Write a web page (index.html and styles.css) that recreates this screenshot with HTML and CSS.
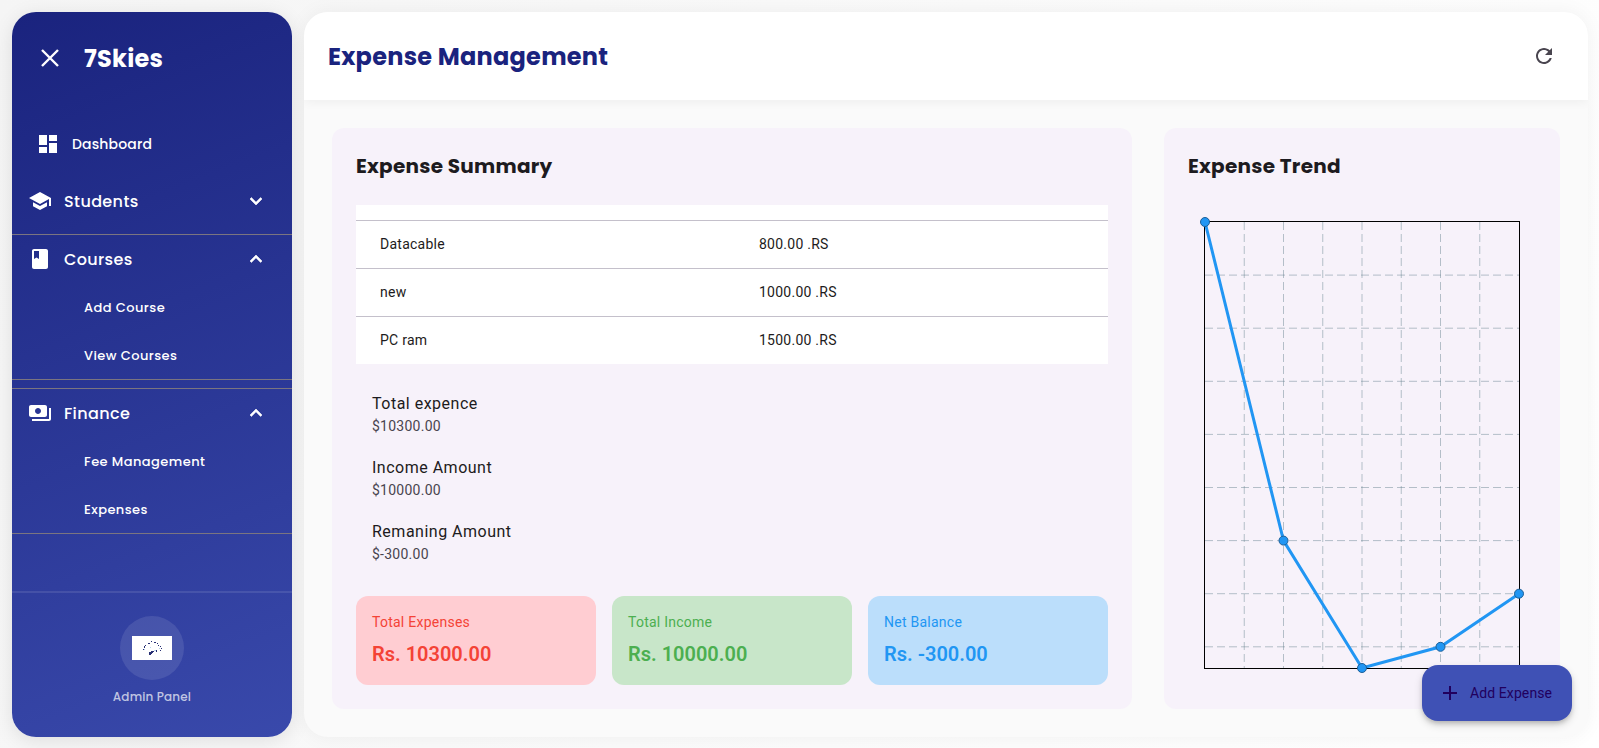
FILE: index.html
```
<!DOCTYPE html>
<html lang="en">
<head>
<meta charset="utf-8">
<title>Expense Management</title>
<link rel="stylesheet" href="styles.css">
</head>
<body>
<div class="app">
  <aside class="sidebar">
    <header class="brand">
      <svg class="close" width="28" height="28" viewBox="0 0 28 28"><path d="M6 6L22 22M22 6L6 22"/></svg>
      <span class="brand-name">7Skies</span>
    </header>
    <nav class="nav">
      <a class="nav-item">
        <svg width="24" height="24" viewBox="0 0 24 24"><path d="M3 13h8V3H3v10zm0 8h8v-6H3v6zm10 0h8V11h-8v10zm0-18v6h8V3h-8z"/></svg>
        <span>Dashboard</span>
      </a>
      <section class="group">
        <div class="group-head">
          <svg width="24" height="24" viewBox="0 0 24 24"><path d="M5 13.18v4L12 21l7-3.82v-4L12 17l-7-3.82zM12 3L1 9l11 6 9-4.91V17h2V9L12 3z"/></svg>
          <span>Students</span>
          <svg class="chevron" width="24" height="24" viewBox="0 0 24 24"><path d="M7.41 8.59L12 13.17l4.59-4.58L18 10l-6 6-6-6z"/></svg>
        </div>
      </section>
      <section class="group open">
        <div class="group-head">
          <svg width="24" height="24" viewBox="0 0 24 24"><path d="M18 2H6c-1.100 0-2 .9-2 2v16c0 1.100.9 2 2 2h12c1.100 0 2-.9 2-2V4c0-1.100-.9-2-2-2zM6 4h5v8l-2.500-1.500L6 12V4z"/></svg>
          <span>Courses</span>
          <svg class="chevron" width="24" height="24" viewBox="0 0 24 24"><path d="M7.41 15.41L12 10.83l4.59 4.58L18 14l-6-6-6 6z"/></svg>
        </div>
        <a class="sub-item">Add Course</a>
        <a class="sub-item">View Courses</a>
      </section>
      <section class="group open">
        <div class="group-head">
          <svg width="24" height="24" viewBox="0 0 24 24"><path d="M19 14V6c0-1.100-.9-2-2-2H3c-1.100 0-2 .9-2 2v8c0 1.100.9 2 2 2h14c1.100 0 2-.9 2-2zm-9-1c-1.660 0-3-1.340-3-3s1.340-3 3-3 3 1.340 3 3-1.340 3-3 3zm13-6v11c0 1.100-.9 2-2 2H4v-2h17V7h2z"/></svg>
          <span>Finance</span>
          <svg class="chevron" width="24" height="24" viewBox="0 0 24 24"><path d="M7.41 15.41L12 10.83l4.59 4.58L18 14l-6-6-6 6z"/></svg>
        </div>
        <a class="sub-item">Fee Management</a>
        <a class="sub-item">Expenses</a>
      </section>
    </nav>
    <footer class="profile">
      <div class="avatar">
        <svg width="40" height="24" viewBox="0 0 40 24" shape-rendering="crispEdges">
          <rect width="40" height="24" fill="#fff"/>
          <g fill="#283074">
            <path d="M17 16h2v-1h2v2h-1v1h-1v1h-2z"/>
            <path d="M11 13h1v1h-1zM12 10h1v2h-1zM13 9h1v1h-1zM16 7h2v1h-2zM19 5h1v1h-1zM22 6h2v1h-2zM25 7h1v1h-1zM26 9h1v1h-1zM28 10h1v1h-1zM29 12h1v1h-1zM28 14h1v1h-1zM24 14h1v2h-1zM21 15h1v1h-1z"/>
          </g>
          <path d="M22 14h2v1h-2zM12 13h1v1h-1zM18 11h1v1h-1zM27 12h1v1h-1z" fill="#b7d3ee"/>
        </svg>
      </div>
      <span class="profile-name">Admin Panel</span>
    </footer>
  </aside>

  <main class="main">
    <header class="topbar">
      <h1>Expense Management</h1>
      <svg width="24" height="24" viewBox="0 0 24 24"><path fill="#49454f" d="M17.650 6.350C16.200 4.900 14.210 4 12 4c-4.420 0-7.990 3.580-7.990 8s3.570 8 7.990 8c3.730 0 6.840-2.550 7.730-6h-2.080c-.82 2.330-3.040 4-5.650 4-3.310 0-6-2.690-6-6s2.690-6 6-6c1.660 0 3.140.69 4.220 1.780L13 11h7V4l-2.350 2.350z"/></svg>
    </header>
    <div class="content">
      <section class="card summary">
        <h2>Expense Summary</h2>
        <div class="table">
          <div class="row"><span>Datacable</span><span>800.00 .RS</span></div>
          <div class="row"><span>new</span><span>1000.00 .RS</span></div>
          <div class="row"><span>PC ram</span><span>1500.00 .RS</span></div>
        </div>
        <dl class="totals">
          <div class="total"><dt>Total expence</dt><dd>$10300.00</dd></div>
          <div class="total"><dt>Income Amount</dt><dd>$10000.00</dd></div>
          <div class="total"><dt>Remaning Amount</dt><dd>$-300.00</dd></div>
        </dl>
        <div class="stats">
          <div class="stat red"><span>Total Expenses</span><strong>Rs. 10300.00</strong></div>
          <div class="stat green"><span>Total Income</span><strong>Rs. 10000.00</strong></div>
          <div class="stat blue"><span>Net Balance</span><strong>Rs. -300.00</strong></div>
        </div>
      </section>
      <section class="card trend">
        <h2>Expense Trend</h2>
        <svg class="chart" width="348" height="480" viewBox="0 0 348 480">
          <g transform="translate(17 17)">
            <g class="grid">
              <path d="M39.250 0V446M78.500 0V446M117.750 0V446M157 0V446M196.250 0V446M235.500 0V446M274.750 0V446"/>
              <path d="M0 53.100H314M0 106.200H314M0 159.300H314M0 212.400H314M0 265.500H314M0 318.600H314M0 371.700H314M0 424.800H314"/>
            </g>
            <rect class="frame" x="-.5" y="-.5" width="315" height="447"/>
            <polyline class="line" points="0,0 78.500,318.600 157,446 235.500,424.800 314,371.700"/>
            <g class="dots">
              <circle cx="0" cy="0" r="4.500"/>
              <circle cx="78.500" cy="318.600" r="4.500"/>
              <circle cx="157" cy="446" r="4.500"/>
              <circle cx="235.500" cy="424.800" r="4.500"/>
              <circle cx="314" cy="371.700" r="4.500"/>
            </g>
          </g>
        </svg>
      </section>
    </div>
  </main>
  <button class="fab">
    <svg width="24" height="24" viewBox="0 0 24 24"><path d="M19 13h-6v6h-2v-6H5v-2h6V5h2v6h6v2z"/></svg>
    <span>Add Expense</span>
  </button>
</div>
</body>
</html>
```
FILE: styles.css
```
* { box-sizing: border-box; }

body {
  margin: 0;
  font-family: Roboto, "Liberation Sans", sans-serif;
  color: #1d1b20;
}

h1, h2, dl, dd { margin: 0; }

.app {
  position: relative;
  display: flex;
  gap: 12px;
  width: 1599px;
  height: 748px;
  padding: 12px 11px 11px 12px;
  overflow: hidden;
  background: linear-gradient(115deg, #f5f5f5, #fff);
}

/* Sidebar */
.sidebar {
  display: flex;
  flex-direction: column;
  flex: 0 0 280px;
  height: 725px;
  border-radius: 24px;
  overflow: hidden;
  color: #fff;
  font-family: Poppins, Inter, sans-serif;
  font-weight: 500;
  background: linear-gradient(158.9deg, #1a237e, #3949ab);
  box-shadow: 0 4px 20px rgba(0, 0, 0, .1);
}

.sidebar svg { fill: #fff; flex: none; }

.sidebar .close { fill: none; stroke: #fff; stroke-width: 2.400; }

.brand {
  display: flex;
  align-items: center;
  gap: 20px;
  height: 92px;
  padding-left: 24px;
}

.brand-name {
  font-size: 24px;
  font-weight: 700;
  letter-spacing: .25px;
}

.nav { flex: 1; padding-top: 16px; }

.nav-item {
  display: flex;
  align-items: center;
  gap: 12px;
  height: 48px;
  padding-left: 24px;
  font-size: 14px;
  letter-spacing: .15px;
}

.group {
  margin-top: 8px;
  border-top: 1px solid transparent;
  border-bottom: 1px solid transparent;
}

.group.open { border-color: #7b7580; }

.group-head {
  display: flex;
  align-items: center;
  gap: 12px;
  height: 48px;
  padding: 0 24px 0 16px;
  font-size: 16px;
  letter-spacing: .38px;
}

.sidebar .chevron { margin-left: auto; stroke: #fff; stroke-width: .6; }

.sub-item {
  display: flex;
  align-items: center;
  height: 48px;
  padding: 1px 0 0 72px;
  font-size: 13px;
  letter-spacing: .43px;
}

.profile {
  display: flex;
  flex-direction: column;
  align-items: center;
  gap: 8px;
  height: 146px;
  padding-top: 23px;
  border-top: 2px solid rgba(255, 255, 255, .1);
}

.avatar {
  display: flex;
  align-items: center;
  justify-content: center;
  width: 64px;
  height: 64px;
  border-radius: 50%;
  background: rgba(255, 255, 255, .1);
}

.profile-name {
  font-size: 12px;
  line-height: 18px;
  letter-spacing: .15px;
  color: rgba(255, 255, 255, .7);
}

/* Main panel */
.main {
  flex: 1;
  height: 725px;
  border-radius: 24px;
  overflow: hidden;
  background: #fafafa;
  box-shadow: 0 0 20px rgba(0, 0, 0, .05);
}

.topbar {
  display: flex;
  align-items: center;
  justify-content: space-between;
  height: 88px;
  padding: 0 32px 0 24px;
  background: #fff;
  box-shadow: 0 2px 10px rgba(0, 0, 0, .05);
}

h1, h2 {
  font-family: Poppins, Inter, sans-serif;
  font-weight: 700;
  letter-spacing: .26px;
}

h1 { padding-top: 2px; font-size: 24px; line-height: 36px; color: #1a237e; }
h2 { font-size: 20px; line-height: 28px; }

.content {
  display: grid;
  grid-template-columns: 800px 396px;
  gap: 32px;
  height: 609px;
  padding: 28px 28px 0;
}

.card {
  height: 581px;
  padding: 24px;
  border-radius: 12px;
  background: #f7f2fa;
}

.table {
  margin-top: 25px;
  padding-top: 15px;
  background: #fff;
}

.row {
  display: grid;
  grid-template-columns: 379px 1fr;
  align-items: center;
  height: 48px;
  padding: 0 0 2px 24px;
  border-top: 1px solid #c4c0cb;
  font-size: 14px;
  letter-spacing: .25px;
}

.totals { padding: 16px 16px 0; }

.total { height: 64px; padding-top: 12px; }

.total dt {
  font-size: 16px;
  line-height: 24px;
  letter-spacing: .5px;
}

.total dd {
  font-size: 14px;
  line-height: 20px;
  letter-spacing: .25px;
  color: #49454f;
}

.stats {
  display: grid;
  grid-template-columns: repeat(3, 1fr);
  gap: 16px;
  margin-top: 24px;
}

.stat {
  display: flex;
  flex-direction: column;
  gap: 8px;
  height: 89px;
  padding: 16px;
  border-radius: 12px;
  font-size: 14px;
  line-height: 20px;
  letter-spacing: .25px;
}

.stat strong {
  font-size: 20px;
  line-height: 28px;
  font-weight: 600;
  letter-spacing: 0;
}

.red { background: #ffcdd2; color: #f44336; }
.green { background: #c8e6c9; color: #4caf50; }
.blue { background: #bbdefb; color: #2196f3; }

/* Trend chart */
.chart { display: block; margin-top: 25px; overflow: visible; }

.grid path {
  fill: none;
  stroke: #607d8b;
  stroke-width: .45;
  stroke-dasharray: 8 4;
}

.frame { fill: none; stroke: #000; stroke-width: 1; }

.line {
  fill: none;
  stroke: #2196f3;
  stroke-width: 3;
}

.dots circle { fill: #2196f3; stroke: #1c5f97; stroke-width: 1; }

/* Floating action button */
.fab {
  position: absolute;
  right: 27px;
  bottom: 27px;
  display: flex;
  align-items: center;
  gap: 8px;
  width: 150px;
  height: 56px;
  padding: 0 0 0 16px;
  border: 0;
  border-radius: 16px;
  background: #3f51b5;
  color: #21005d;
  font-family: Roboto, sans-serif;
  font-size: 14px;
  letter-spacing: .1px;
  box-shadow: 0 3px 5px -1px rgba(0, 0, 0, .2), 0 4px 8px rgba(0, 0, 0, .14);
}

.fab svg { fill: #21005d; }
```
